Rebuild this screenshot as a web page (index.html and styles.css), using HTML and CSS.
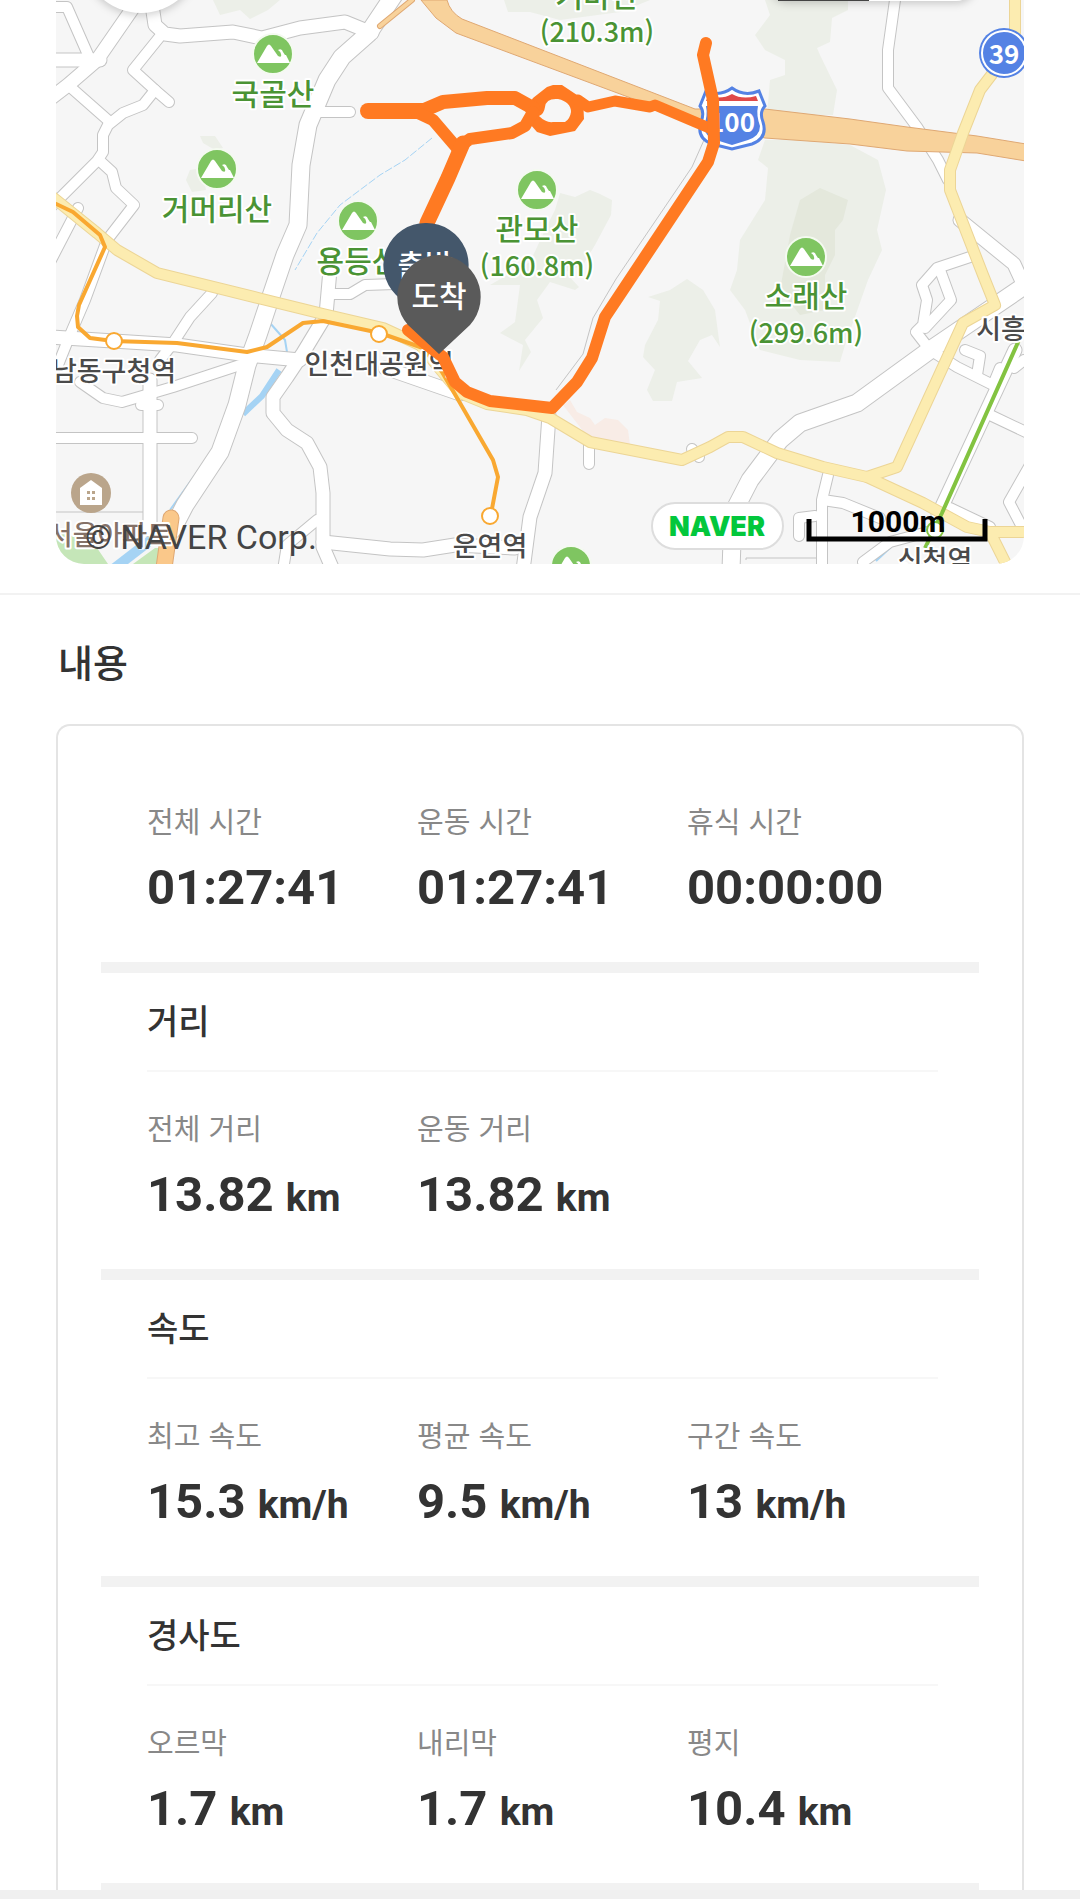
FILE: index.html
```html
<!DOCTYPE html>
<html lang="ko">
<head>
<meta charset="utf-8">
<meta name="viewport" content="width=device-width, initial-scale=1">
<title>운동 기록</title>
<link rel="stylesheet" href="styles.css">
</head>
<body>
<main>
  <figure class="map">
    <svg class="map-canvas" viewBox="56 0 968 564" role="img" aria-label="이동 경로 지도">
      <defs>
        <g id="roads-s">
          <path d="M56 7H67L89 57"/>
          <path d="M68 85L110 122"/>
          <path d="M162 34L133 70L155 90L169 102"/>
          <path d="M155 90L143 105L123 113L108 125L103 135V152L97 161L50 208"/>
          <path d="M100 161L112 172L116 188L134 205L107 240L85 300L70 335L54 375"/>
          <path d="M50 262L78 208"/>
          <path d="M320 112H350"/>
          <path d="M212 293L190 317L173 343L160 360"/>
          <path d="M80 382L103 398L122 402L173 387L240 365"/>
          <path d="M50 438H192M141 405H158"/>
          <path d="M330 294H350L365 285L395 284"/>
          <path d="M283 570L287 545L317 520"/>
          <path d="M589 445V464M692 449L699 457"/>
          <path d="M895 0L888 50V88L917 127L938 160L948 180"/>
          <path d="M970 257L937 268L922 285L927 300L923 325L916 332L930 350"/>
          <path d="M940 270L951 300L925 328"/>
          <path d="M930 350L957 367L993 385L1000 368"/>
          <path d="M965 350L980 356L977 375"/>
          <path d="M990 415L1030 434M950 508L990 527"/>
          <path d="M828 475L822 500V564M823 500L843 503L880 518"/>
          <path d="M799 536V518L815 516"/>
          <path d="M863 562L890 542L935 530"/>
          <path d="M1030 465L1009 502L1022 527M1014 368L1024 360"/>
        </g>
        <g id="roads-m">
          <path d="M50 60H100"/>
          <path d="M135 5L97 60L68 85L46 102"/>
          <path d="M152 5L155 25L165 34L180 36L233 32L262 38L300 28L345 22L372 33"/>
          <path d="M150 380V530"/>
          <path d="M50 337L177 345L247 355L300 360"/>
          <path d="M330 270L326 315L303 353L287 377L273 397V413L287 430L307 443L320 467L323 493V547L333 570"/>
          <path d="M323 542L390 549L423 550L455 545L515 548"/>
          <path d="M385 368L460 394"/>
          <path d="M549 415L545 473L530 517L523 570"/>
          <path d="M960 220L1014 264L1026 290"/>
          <path d="M1015 350L938 515"/>
        </g>
        <g id="roads-l">
          <path d="M396 -8L368 34L342 57L327 80L308 125L301 165L298 225L285 255L268 305L258 335L247 365L237 405L220 452L185 505L172 530"/>
          <path d="M1030 282L930 350L857 403L800 423L780 440L750 480L733 513L731 570"/>
        </g>
        <g id="roads-y">
          <path d="M50 195L97 233L117 250L157 273L262 299L323 314L383 328L420 345L460 393L487 404L527 410L550 418L590 442L682 460L710 447L728 437L743 437L777 453L823 467L867 477L923 503L967 527L990 532H1030"/>
          <path d="M867 477L897 467L963 323L995 305L983 275L950 190V170L963 133L980 90L993 73L1015 33V-5"/>
          <path d="M990 532L1007 566"/>
        </g>
        <g id="peak">
          <circle r="20" fill="#7fc561" stroke="#f4faf0" stroke-width="2"/>
          <path fill="#fff" d="M-16 9L-6 -8Q-4 -11 -2 -8L5 2Q9 4 8 0Q8 -2 5 -4Q9 -6 10 -2L12 1L13 1L17 9Z"/>
        </g>
      </defs>

      <rect class="land" x="56" width="968" height="564"/>

      <g class="forest">
        <path d="M213 0L220 15L240 10L250 19L268 10L280 0Z"/>
        <path d="M200 136L215 136L223 148L215 150L203 143ZM190 170L202 168L206 190L192 192L186 180Z"/>
        <path d="M504 0L508 12L530 12L560 20L620 12L650 0Z"/>
        <path d="M560 193L575 197L590 190L600 194L612 200L611 215L595 245L583 265L565 272L579 287L575 290L550 282L537 300L543 318L525 340L531 352L519 371L523 345L500 333L515 322L520 285L490 285L530 262L545 230L555 210Z"/>
        <path d="M687 279L670 290L648 297L660 301L658 320L645 345L643 357L655 370L647 390L653 401L672 401L677 382L702 378L688 361L700 340L712 335L720 347L715 310L703 290Z"/>
        <path d="M765 0L770 15L755 35L765 50L785 60L785 75L770 80L767 115H833L837 90L820 55L817 48L830 42L832 18L848 10V0Z"/>
        <path d="M765 140L758 160L768 168L765 200L740 240L737 270L730 290L745 310L760 350L800 360L840 362L845 345L868 280L882 250L877 230L886 190L878 160L850 145L800 140Z"/>
      </g>
      <path class="forest-deep" d="M800 200L820 188L848 200L843 220L835 230V255L825 275V310L800 315L780 290L790 235Z"/>
      <path class="built" d="M563 405L570 400L577 412L590 418L595 425L605 418L618 420L628 430L630 445L590 440Z"/>
      <path class="park" d="M56 530L95 545L108 564H56ZM133 564L155 548H166L160 564Z"/>
      <g class="water">
        <path stroke-width="6" d="M279 370L262 396L243 414"/>
        <path stroke-width="10" d="M112 570L160 533"/>
        <path stroke-width="2" d="M270 323L285 340L287 352M213 450L170 510"/>
        <path stroke-width="5" d="M875 560L890 546"/>
        <path stroke-width="1" stroke-dasharray="8 2" d="M432 138L405 160L380 175L340 205L317 233L295 270"/>
      </g>
      <path class="outline" d="M56 512H143M332 276V289H354M746 560V558H822M704 140L692 167L616 279L593 318L583 354L556 390"/>

      <use href="#roads-s" class="road case s"/>
      <use href="#roads-m" class="road case m"/>
      <use href="#roads-l" class="road case l"/>
      <use href="#roads-s" class="road fill s"/>
      <use href="#roads-m" class="road fill m"/>
      <use href="#roads-l" class="road fill l"/>

      <path class="highway" d="M421 0H447Q450 12 462 19L695 109H765L850 119L907 127L977 136L1026 144V161L977 153L907 151L850 144L765 138L690 120L456 33L436 18Z"/>
      <path class="ramp-case" d="M412 0L380 26"/>
      <path class="ramp" d="M412 0L380 26"/>
      <path class="express-case" d="M171 518L163 575"/>
      <path class="express" d="M171 518L163 575"/>

      <use href="#roads-y" class="road case-y"/>
      <use href="#roads-y" class="road fill-y"/>

      <path class="rail" d="M50 201L73 212L100 235L105 247L79 305L77 316L78 327L90 338L113 341L177 343L247 352L267 347L303 323L323 321L380 333L423 348L442 372L460 403L493 460L498 477L491 514"/>
      <path class="rail-green" d="M1019 340L942 513L925 548"/>
      <circle class="station-green" cx="935" cy="530" r="8"/>
      <circle class="station" cx="114" cy="341" r="8"/>
      <circle class="station" cx="379" cy="334" r="8"/>
      <circle class="station" cx="490" cy="516" r="8"/>

      <use href="#peak" x="273" y="54"/>
      <use href="#peak" x="217" y="169"/>
      <use href="#peak" x="358" y="221"/>
      <use href="#peak" x="537" y="190"/>
      <use href="#peak" x="806" y="257"/>
      <use href="#peak" x="571" y="566"/>

      <g class="label peak-label">
        <text x="273" y="105">국골산</text>
        <text x="217" y="220">거머리산</text>
        <text x="358" y="272">용등산</text>
        <text x="537" y="240">관모산</text>
        <text x="597" y="7">거마산</text>
        <text x="806" y="307">소래산</text>
      </g>
      <g class="label height-label">
        <text x="537" y="276">(160.8m)</text>
        <text x="597" y="42">(210.3m)</text>
        <text x="806" y="343">(299.6m)</text>
      </g>
      <g class="label station-label">
        <text x="114" y="381">남동구청역</text>
        <text x="379" y="374">인천대공원역</text>
        <text x="490" y="556">운연역</text>
        <text x="1001" y="339">시흥</text>
        <text x="935" y="570">신천역</text>
      </g>
      <g transform="translate(91 493)">
        <circle r="20" fill="#baa58b"/>
        <path fill="#fff" d="M-11 12V-5L0 -13L11 -5V12Z"/>
        <path fill="#baa58b" d="M-4 -2h3v3h-3zM1 -2h3v3h-3zM-4 4h3v3h-3zM1 4h3v3h-3z"/>
      </g>
      <text class="label place-label" x="172" y="545">서울아파트</text>

      <g transform="translate(732 118)">
        <path fill="#fff" stroke="#5482e4" stroke-width="3" d="M0 -30Q-12 -21 -26 -27L-32 -12Q-27 -6 -31 4Q-36 20 -20 26L0 31L20 26Q36 20 31 4Q27 -6 33 -12L27 -27Q12 -21 0 -30Z"/>
        <path fill="#5482e4" d="M-26 -12H26Q24 -3 28 8Q28 18 16 22L0 27L-16 22Q-28 18 -28 8Q-24 -3 -26 -12Z"/>
        <path fill="#e04a4a" d="M-26 -17L-24 -22Q-10 -18 0 -24Q10 -18 24 -22L26 -17Z"/>
        <text class="shield-label" y="14">100</text>
      </g>
      <g transform="translate(1004 53)">
        <circle r="25" fill="#5482e4"/>
        <circle r="22" fill="none" stroke="#fff" stroke-width="2"/>
        <text class="shield-label" y="11">39</text>
      </g>

      <path class="route-loop" fill-rule="evenodd" d="M533 98L547 87L553 85H562L583 99L584 119L575 131L550 136L537 132L530 124L525 110ZM545 107Q546 98 558 99Q571 102 571 112Q570 119 565 122H553Q546 123 539 116Q544 114 545 107Z"/>
      <g class="route">
        <path stroke-width="16" stroke-linecap="round" d="M368 111H425"/>
        <path stroke-width="14" d="M422 111L443 102L487 98H515L533 108"/>
        <path stroke-width="11" d="M578 100L588 107L615 101L650 107L655 105L714 130"/>
        <path stroke-width="12" d="M533 112L525 126L512 133L470 139L457 148L433 120L416 112"/>
        <path stroke-width="15" d="M463 143L448 178L427 223"/>
        <path stroke-width="12" d="M706 43L703 55L713 100L714 143L708 162L617 299L605 317L592 358L577 382L552 408L490 401L467 392L455 382L443 357L422 341L408 330"/>
      </g>

      <g class="pin-start">
        <path d="M426 223a42 42 0 0 1 30 72L426 322L396 295a42 42 0 0 1 30 -72Z"/>
        <text x="425" y="276">출발</text>
      </g>
      <g class="pin-end">
        <path d="M439 255a42 42 0 0 1 31 70L439 354L408 325a42 42 0 0 1 31 -70Z"/>
        <text x="439" y="307">도착</text>
      </g>

      <circle class="control" cx="141" cy="-46" r="59"/>
      <rect class="control" x="768" y="-40" width="208" height="41" rx="20"/>
      <path fill="#444" d="M778 0H869V1H778Z"/>

      <text class="copyright" x="85" y="549">© NAVER Corp.</text>
      <rect class="brand" x="652" y="503" width="131" height="46" rx="23"/>
      <text class="brand-label" x="717" y="536">NAVER</text>
      <path class="scale" d="M809 519V539H985V519"/>
      <text class="scale-label" x="898" y="532">1000m</text>
    </svg>
  </figure>

  <section class="content">
    <h2 class="content-title">내용</h2>
    <div class="card">
      <section class="block block-first">
        <dl class="stats">
          <div><dt>전체 시간</dt><dd>01:27:41</dd></div>
          <div><dt>운동 시간</dt><dd>01:27:41</dd></div>
          <div><dt>휴식 시간</dt><dd>00:00:00</dd></div>
        </dl>
      </section>
      <section class="block">
        <h3>거리</h3>
        <dl class="stats">
          <div><dt>전체 거리</dt><dd>13.82 <span>km</span></dd></div>
          <div><dt>운동 거리</dt><dd>13.82 <span>km</span></dd></div>
        </dl>
      </section>
      <section class="block">
        <h3>속도</h3>
        <dl class="stats">
          <div><dt>최고 속도</dt><dd>15.3 <span>km/h</span></dd></div>
          <div><dt>평균 속도</dt><dd>9.5 <span>km/h</span></dd></div>
          <div><dt>구간 속도</dt><dd>13 <span>km/h</span></dd></div>
        </dl>
      </section>
      <section class="block block-last">
        <h3>경사도</h3>
        <dl class="stats">
          <div><dt>오르막</dt><dd>1.7 <span>km</span></dd></div>
          <div><dt>내리막</dt><dd>1.7 <span>km</span></dd></div>
          <div><dt>평지</dt><dd>10.4 <span>km</span></dd></div>
        </dl>
      </section>
    </div>
  </section>
</main>
<footer class="page-end"></footer>
</body>
</html>
```
FILE: styles.css
```css
* {
  box-sizing: border-box;
}

body {
  margin: 0;
  background: #fff;
  color: #333;
  font-family: "Noto Sans CJK KR", sans-serif;
}

h2, h3, dl, dd, figure {
  margin: 0;
}

/* Map */
.map {
  margin: 0 56px;
  border-radius: 0 0 28px 28px;
  overflow: hidden;
}

.map-canvas {
  display: block;
  width: 100%;
  height: auto;
}

.land { fill: #f6f6f6; }
.forest { fill: #ecefe8; }
.forest-deep { fill: #e4e8dc; }
.built { fill: #f8ece6; }
.park { fill: #c5e6b8; }
.water { fill: none; stroke: #a5d3f4; }
.outline { fill: none; stroke: #c4c4c4; stroke-width: 1; }

.road {
  fill: none;
  stroke-linejoin: round;
  stroke-linecap: round;
}

.case { stroke: #c4c4c4; }
.fill { stroke: #fff; }
.case.s { stroke-width: 12px; }
.fill.s { stroke-width: 10px; }
.case.m { stroke-width: 15px; }
.fill.m { stroke-width: 13px; }
.case.l { stroke-width: 19px; }
.fill.l { stroke-width: 17px; }
.case-y { stroke: #ecd596; stroke-width: 12px; }
.fill-y { stroke: #fcecb0; stroke-width: 10px; }

.highway { fill: #f8d29b; stroke: #dfa873; stroke-width: 1; }
.ramp-case, .ramp, .express-case, .express { fill: none; stroke-linecap: round; }
.ramp-case { stroke: #dfa873; stroke-width: 6px; }
.ramp { stroke: #f8d29b; stroke-width: 4px; }
.express-case { stroke: #dfa873; stroke-width: 17px; }
.express { stroke: #fac88a; stroke-width: 15px; }

.rail { fill: none; stroke: #f9a831; stroke-width: 4px; stroke-linejoin: round; }
.rail-green { fill: none; stroke: #83c341; stroke-width: 4px; }
.station { fill: #fff; stroke: #f9a831; stroke-width: 2px; }
.station-green { fill: #fff; stroke: #83c341; stroke-width: 2px; }

.label {
  stroke: #fff;
  stroke-width: 4px;
  stroke-linejoin: round;
  paint-order: stroke;
  font-weight: 500;
  text-anchor: middle;
}

.peak-label { fill: #4a9334; font-size: 30px; }
.height-label { fill: #4a9334; font-size: 27px; }
.station-label { fill: #4a4a4a; font-size: 27px; }
.place-label { fill: #857167; font-size: 27px; text-anchor: end; }
.shield-label { fill: #fff; font-size: 26px; font-weight: 700; text-anchor: middle; }

.route { fill: none; stroke: #ff7a22; stroke-linejoin: round; stroke-linecap: round; }
.route-loop { fill: #ff7a22; }

.pin-start { fill: #44576b; }
.pin-end { fill: #5a5a5a; }
.pin-start text, .pin-end text {
  fill: #fff;
  font-size: 30px;
  font-weight: 500;
  text-anchor: middle;
}

.control { fill: #fff; filter: drop-shadow(0 2px 4px #0003); }

.copyright { fill: #444; font-family: Roboto, sans-serif; font-size: 34px; }
.brand { fill: #fff; stroke: #ddd; stroke-width: 2px; }
.brand-label { fill: #03c73c; font-family: Inter, sans-serif; font-size: 27px; font-weight: 900; text-anchor: middle; }
.scale { fill: none; stroke: #000; stroke-width: 5px; }
.scale-label { fill: #000; font-family: Roboto, sans-serif; font-size: 30px; font-weight: 700; text-anchor: middle; }

/* Content */
.content {
  margin-top: 29px;
  padding: 38px 56px 0;
  border-top: 2px solid #f2f2f2;
}

.content-title {
  margin-bottom: 35px;
  padding-left: 2px;
  font-size: 38px;
  font-weight: 500;
  line-height: 56px;
}

.card {
  padding: 0 43px;
  border: 2px solid #e4e4e4;
  border-bottom: 0;
  border-radius: 14px 14px 0 0;
}

.block {
  padding: 22px 22px 46px 46px;
  border-bottom: 11px solid #f2f2f2;
}

.block-first { padding-top: 74px; }
.block-last { border-bottom-width: 7px; }

.block h3 {
  margin: 0 19px 35px 0;
  padding-bottom: 25px;
  border-bottom: 2px solid #f7f7f7;
  font-size: 34px;
  font-weight: 500;
  line-height: 50px;
}

.stats {
  display: grid;
  grid-template-columns: repeat(3, 1fr);
}

.stats dt {
  margin-bottom: 20px;
  color: #888;
  font-size: 29px;
  font-weight: 400;
  line-height: 40px;
}

.stats dd {
  font-family: Roboto, "Noto Sans CJK KR", sans-serif;
  font-size: 49px;
  font-weight: 700;
  line-height: 56px;
  white-space: nowrap;
}

.stats dd span {
  font-size: 39px;
  line-height: 1;
}

.page-end {
  height: 9px;
  background: #f0f0f0;
}
```
